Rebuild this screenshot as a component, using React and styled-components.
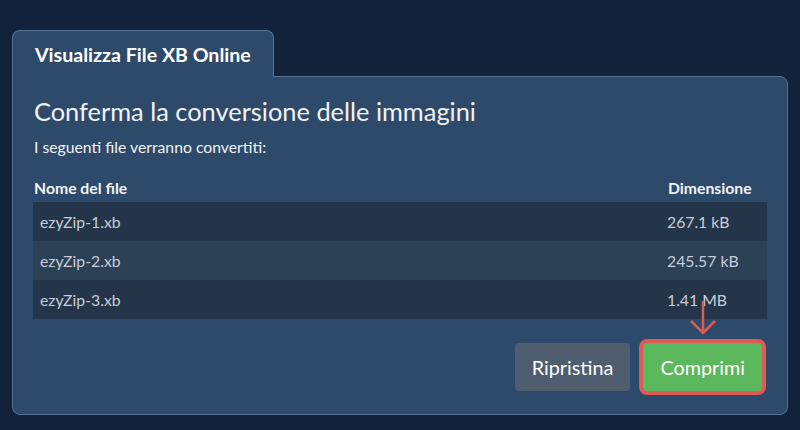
import React from 'react';
import styled, { createGlobalStyle } from 'styled-components';

const GlobalStyle = createGlobalStyle`
  html, body {
    margin: 0;
    padding: 0;
    background: #12223a;
  }
  body {
    font-family: Lato, "Open Sans", sans-serif;
  }
`;

const Page = styled.div`
  padding: 30px 12px 15px 12px;
  min-height: 430px;
  box-sizing: border-box;
`;

const Tab = styled.div`
  display: inline-flex;
  align-items: center;
  box-sizing: border-box;
  height: 47px;
  padding: 1px 22px 0 22px;
  background: #2d4a6b;
  border: 1px solid #587391;
  border-bottom: none;
  border-radius: 8px 8px 0 0;
  margin-bottom: -1px;
  position: relative;
  color: #ffffff;
  font-size: 19.6px;
  font-weight: 700;
`;

const Panel = styled.div`
  background: #2d4a6b;
  border: 1px solid #587391;
  border-radius: 0 8px 8px 8px;
  padding: 19px 20px 23px 20px;
`;

const Heading = styled.h2`
  margin: 0 0 0 1px;
  font-size: 25.4px;
  line-height: 31px;
  font-weight: 400;
  color: #f2f2f2;
`;

const Subtitle = styled.p`
  margin: 11px 0 0 1px;
  font-size: 15.75px;
  line-height: 18px;
  color: #f2f2f2;
`;

const Table = styled.div`
  margin-top: 23px;
  display: grid;
  grid-template-columns: 1fr 100px;
`;

const HeadCell = styled.div`
  padding: 0 0 5px 1px;
  font-size: 15.75px;
  line-height: 18px;
  font-weight: 700;
  color: #f2f2f2;
`;

const Cell = styled.div`
  height: 39px;
  display: flex;
  align-items: center;
  padding-left: ${p => p.$pad}px;
  background: ${p => (p.$odd ? '#253549' : '#2c4056')};
  font-size: 15.75px;
  color: #c6cdd7;
`;

const Actions = styled.div`
  margin-top: 24px;
  display: flex;
  justify-content: flex-end;
  gap: 13px;
  padding-right: 5px;
`;

const Button = styled.button`
  position: relative;
  height: 48px;
  padding: 0 17px;
  border: none;
  border-radius: 4px;
  font-family: Lato, "Open Sans", sans-serif;
  font-size: 19.8px;
  color: #ffffff;
  background: ${p => (p.$primary ? '#5cb85c' : '#4f5e6f')};
  box-shadow: ${p => (p.$highlight ? '0 0 0 4px #e05a55' : 'none')};
  cursor: pointer;
`;

const Arrow = styled.svg`
  position: absolute;
  left: 50%;
  bottom: calc(100% + 8px);
  transform: translateX(-50%);
`;

const files = [
  { name: 'ezyZip-1.xb', size: '267.1 kB' },
  { name: 'ezyZip-2.xb', size: '245.57 kB' },
  { name: 'ezyZip-3.xb', size: '1.41 MB' },
];

export default function App() {
  return (
    <Page>
      <GlobalStyle />
      <Tab>Visualizza File XB Online</Tab>
      <Panel>
        <Heading>Conferma la conversione delle immagini</Heading>
        <Subtitle>I seguenti file verranno convertiti:</Subtitle>
        <Table>
          <HeadCell>Nome del file</HeadCell>
          <HeadCell>Dimensione</HeadCell>
          {files.map((f, i) => (
            <React.Fragment key={f.name}>
              <Cell $odd={i % 2 === 0} $pad={7}>{f.name}</Cell>
              <Cell $odd={i % 2 === 0} $pad={0}>{f.size}</Cell>
            </React.Fragment>
          ))}
        </Table>
        <Actions>
          <Button>Ripristina</Button>
          <Button $primary $highlight>
            <Arrow width="30" height="34" viewBox="0 0 30 34">
              <path d="M15 0 V32 M3 20 L15 32 L27 20" fill="none" stroke="#e05a55" strokeWidth="2.5" />
            </Arrow>
            Comprimi
          </Button>
        </Actions>
      </Panel>
    </Page>
  );
}
